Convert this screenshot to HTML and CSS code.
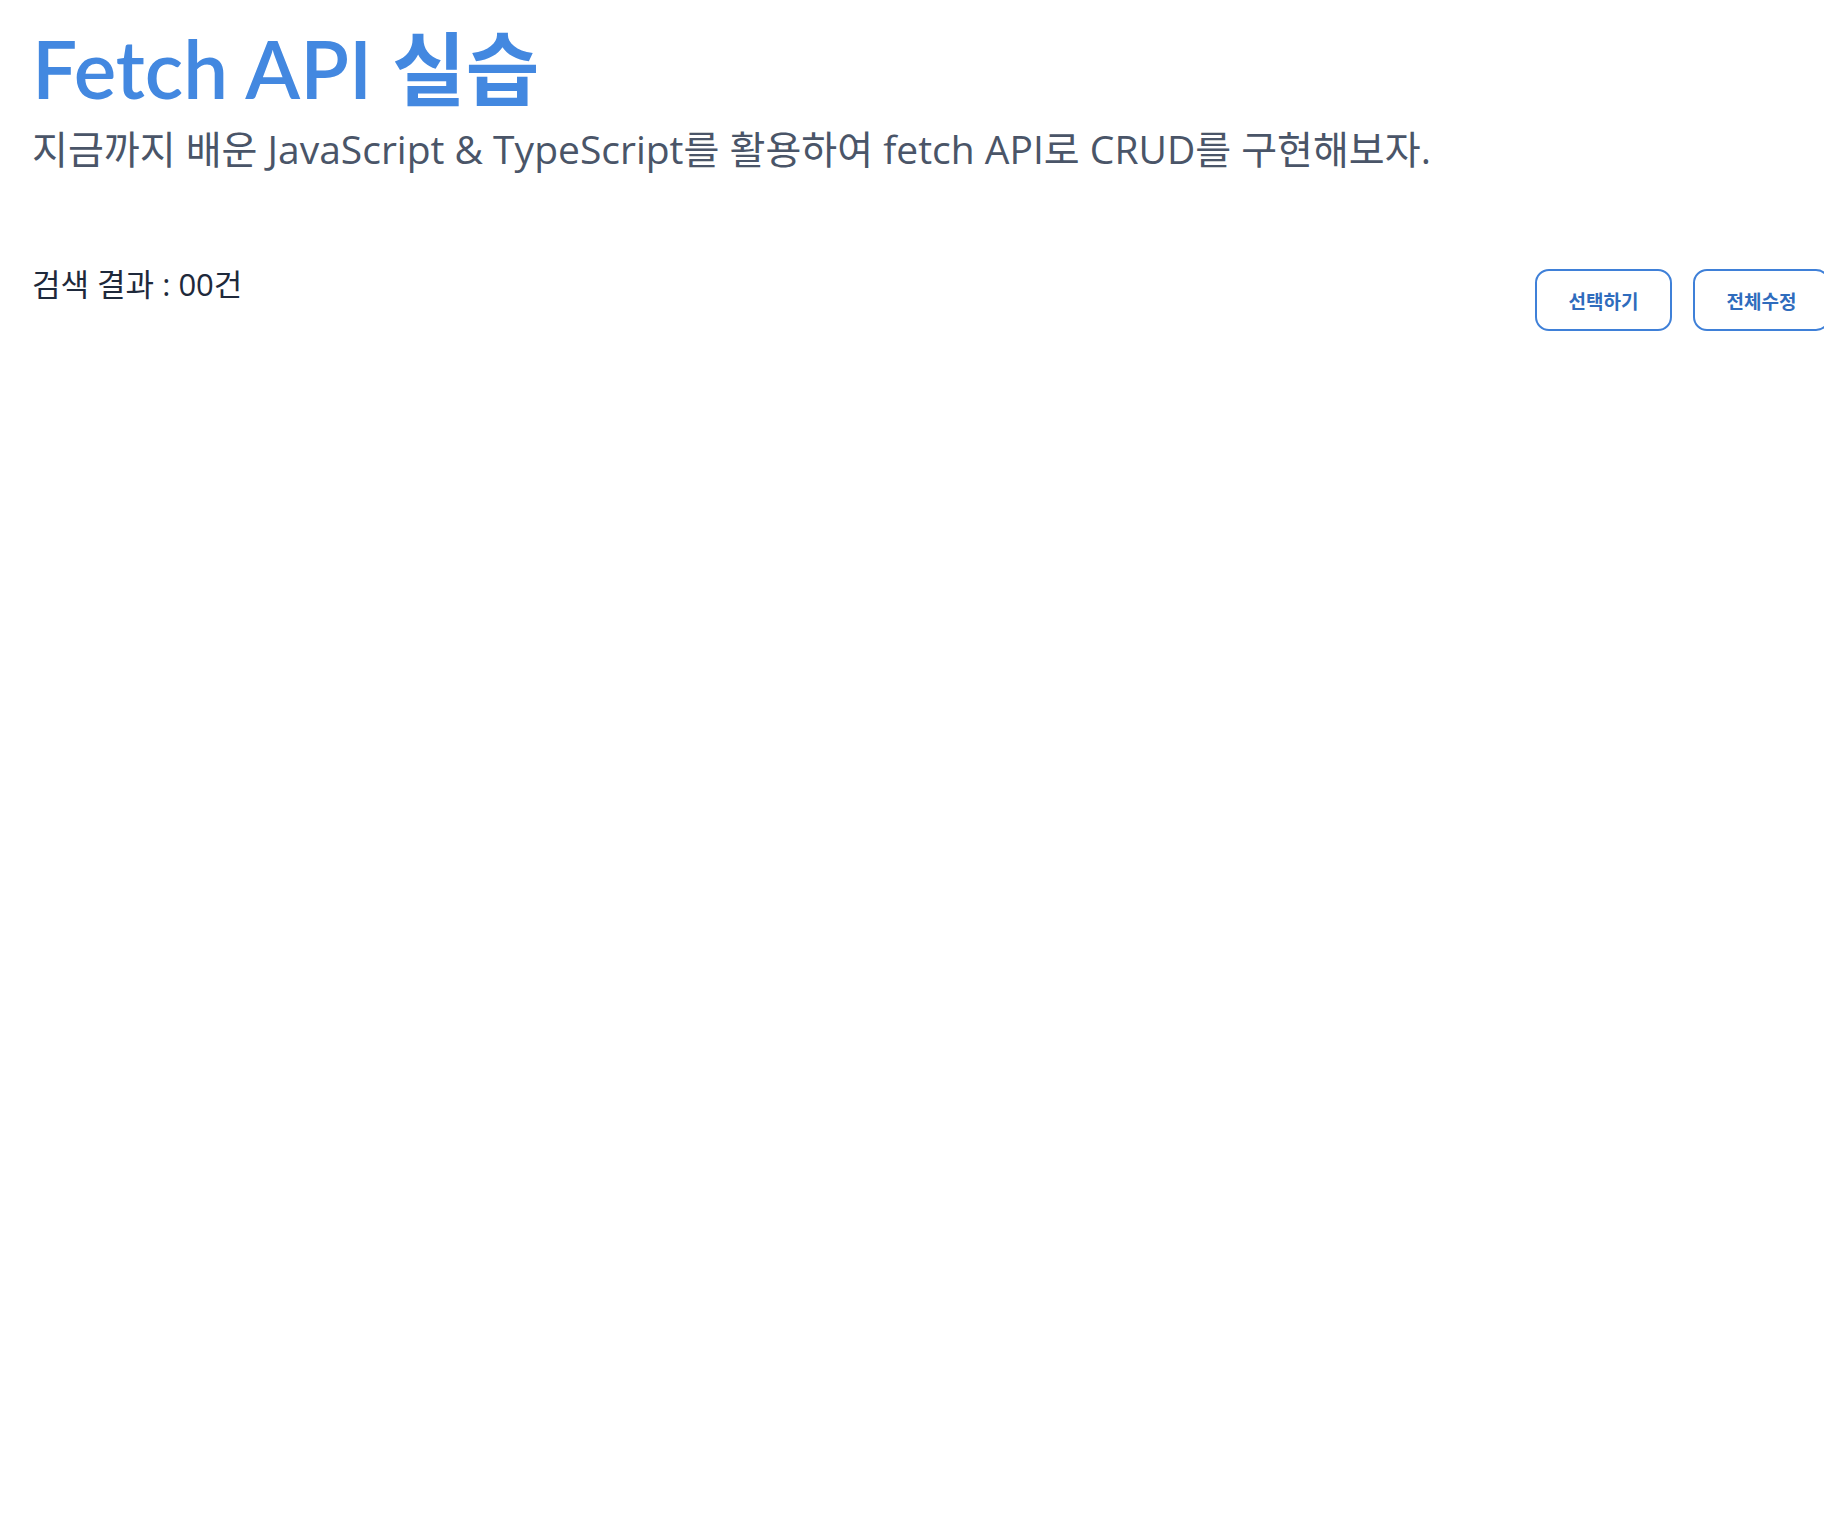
FILE: index.html
```html
<!DOCTYPE html>
<html lang="ko">
<head>
<meta charset="utf-8">
<title>Fetch API 실습</title>
<link rel="stylesheet" href="styles.css">
</head>
<body>
<main class="page">
  <header class="intro">
    <h1 class="title">Fetch API 실습</h1>
    <p class="subtitle">지금까지 배운 JavaScript &amp; TypeScript를 활용하여 fetch API로 CRUD를 구현해보자.</p>
  </header>
  <section class="toolbar">
    <p class="count">검색 결과 : 00건</p>
    <div class="actions">
      <button class="btn" type="button">선택하기</button>
      <button class="btn" type="button">전체수정</button>
    </div>
  </section>
</main>
</body>
</html>
```

FILE: styles.css
```css
html, body {
  margin: 0;
  padding: 0;
  background: #ffffff;
  overflow-x: hidden;
}

body {
  font-family: "Lato", "Noto Sans CJK KR", sans-serif;
}

.page {
  padding: 20px 0 0 32px;
}

.intro {
  display: flex;
  flex-direction: column;
}

.title {
  margin: 0;
  font-size: 80px;
  line-height: 96px;
  font-weight: 600;
  color: #4388e0;
}

.subtitle {
  margin: 9px 0 0;
  font-family: "Open Sans", "Noto Sans CJK KR", sans-serif;
  font-size: 39px;
  line-height: 48px;
  font-weight: 400;
  color: #4a5568;
}

.toolbar {
  display: flex;
  justify-content: space-between;
  align-items: flex-start;
  margin-top: 91px;
  margin-right: -6px;
}

.count {
  margin: 0;
  font-family: "Open Sans", "Noto Sans CJK KR", sans-serif;
  font-size: 31px;
  line-height: 40px;
  color: #1e293b;
}

.actions {
  display: flex;
  gap: 21px;
  margin-top: 5px;
}

.btn {
  width: 137px;
  height: 62px;
  border: 2px solid #3f80d8;
  border-radius: 14px;
  background: #ffffff;
  color: #2f6cbd;
  font-family: "Noto Sans CJK KR", sans-serif;
  font-size: 19px;
  font-weight: 700;
  padding: 0;
}
```
